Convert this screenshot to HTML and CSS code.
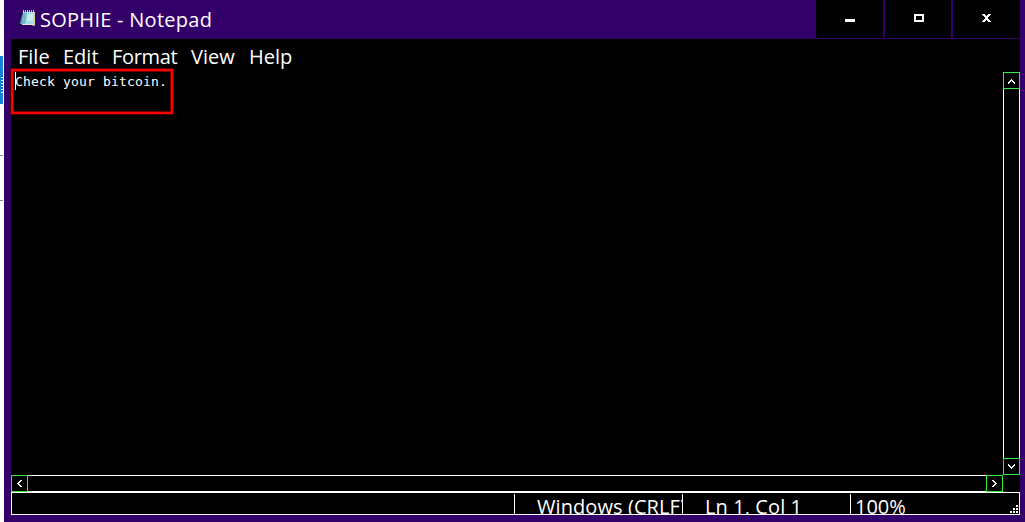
FILE: index.html
```html
<!DOCTYPE html>
<html lang="en">
<head>
<meta charset="utf-8">
<title>SOPHIE - Notepad</title>
<link rel="stylesheet" href="styles.css">
</head>
<body>
<div class="desktop">
  <div class="behind"><div class="behind-blue"></div><div class="behind-tick tick-a"></div><div class="behind-tick tick-b"></div></div>
  <div class="window">
    <header class="titlebar">
      <svg class="app-icon" width="17" height="18" viewBox="0 0 17 18">
        <path d="M4 2.5L0.5 15H12L15 16.5H16V3Z" fill="#477d9b"/>
        <path d="M14 3H16V16.5H13Z" fill="#d9cfa4"/>
        <path d="M4.5 3H14.5V15H2.5Z" fill="#a7dbe4"/>
        <path d="M4.5 3H8L6 15H2.5Z" fill="#72b6c9"/>
        <path d="M9 5H14V12H8Z" fill="#c6edf0"/>
        <path d="M3 15.5H15" stroke="#e4e4d8"/>
        <path d="M4.5 1V4M6.5 1V4M8.5 1V4M10.5 1V4M12.5 1V4M14.5 1V4" stroke="#d8eef0" stroke-width=".8"/>
      </svg>
      <span class="title">SOPHIE - Notepad</span>
      <div class="controls">
        <div class="control"><svg width="67" height="38" shape-rendering="crispEdges"><path d="M29 19h10v3H29z" fill="#fff"/></svg></div>
        <div class="control"><svg width="66" height="38" shape-rendering="crispEdges"><path d="M29 14h10v8H29zM31 16v4h6v-4z" fill="#fff" fill-rule="evenodd"/></svg></div>
        <div class="control"><svg width="67" height="38" shape-rendering="crispEdges"><path d="M29 14h3v1h1v1h1v-1h1v-1h3v1h-1v1h-1v1h-1v2h1v1h1v1h1v1h-3v-1h-1v-1h-1v1h-1v1h-3v-1h1v-1h1v-1h1v-2h-1v-1h-1v-1h-1z" fill="#fff"/></svg></div>
      </div>
    </header>
    <main class="client">
      <nav class="menu"><span class="file">File</span><span class="edit">Edit</span><span class="format">Format</span><span class="view">View</span><span class="help">Help</span></nav>
      <div class="editor">
        <div class="page"><div class="highlight"><span class="caret"></span><span class="note">Check your bitcoin.</span></div></div>
        <div class="vscroll">
          <div class="arrow"><svg width="15" height="15" shape-rendering="crispEdges"><path d="M7 6h1v1h1v1h1v1h1v2h-1v-1h-1v-1h-1v-1h-1v1h-1v1h-1v1h-1v-2h1v-1h1v-1h1z" fill="#fff"/></svg></div>
          <div class="vtrack"></div>
          <div class="arrow"><svg width="15" height="15" shape-rendering="crispEdges"><path d="M4 5h1v1h1v1h1v1h1v-1h1v-1h1v-1h1v2h-1v1h-1v1h-1v1h-1v-1h-1v-1h-1v-1h-1z" fill="#fff"/></svg></div>
        </div>
      </div>
      <div class="hscroll">
        <div class="arrow"><svg width="15" height="15" shape-rendering="crispEdges"><path d="M8 4h2v1h-1v1h-1v1h-1v1h1v1h1v1h1v1h-2v-1h-1v-1h-1v-1h-1v-1h1v-1h1v-1h1z" fill="#fff"/></svg></div>
        <div class="htrack"></div>
        <div class="arrow"><svg width="15" height="15" shape-rendering="crispEdges"><path d="M5 4h2v1h1v1h1v1h1v1h-1v1h-1v1h-1v1h-2v-1h1v-1h1v-1h1v-1h-1v-1h-1v-1h-1z" fill="#fff"/></svg></div>
      </div>
      <footer class="status">
        <div class="cell blank"></div>
        <div class="cell wide encoding"><span>Windows (CRLF)</span></div>
        <div class="cell wide position"><span>Ln 1, Col 1</span></div>
        <div class="cell zoom"><span>100%</span></div>
        <svg class="grip" width="8" height="8" shape-rendering="crispEdges"><path d="M6 0h2v2H6zM3 3h2v2H3zM6 3h2v2H6zM0 6h2v2H0zM3 6h2v2H3zM6 6h2v2H6z" fill="#fff"/></svg>
      </footer>
    </main>
  </div>
</div>
</body>
</html>
```
FILE: styles.css
```css
* { box-sizing: border-box; }
body { margin: 0; overflow: hidden; background: #fff; color: #fff; font-family: "Open Sans", "Noto Sans", sans-serif; font-size: 20px; }
svg { display: block; }
.desktop { display: flex; width: 1025px; height: 522px; }
.behind { width: 4px; padding-top: 56px; }
.behind-blue { width: 3px; height: 48px; background: repeating-linear-gradient(#0078d7 0 2px, #fff 2px 3px) 1px 19px / 2px 19px no-repeat, #1683d8; }
.behind-tick { width: 3px; height: 1px; background: #888; }
.tick-a { margin-top: 51px; }
.tick-b { margin-top: 44px; }
.window { width: 1021px; height: 522px; padding: 0 5px 7px 7px; background: #330069; }
.titlebar { display: flex; height: 39px; }
.app-icon { margin: 9px 0 0 8px; }
.title { margin-left: 4px; line-height: 39px; letter-spacing: .27px; white-space: nowrap; }
.controls { display: flex; gap: 2px; height: 38px; margin-left: auto; }
.control { background: #000; }
.client { display: flex; flex-direction: column; height: 476px; background: #000; }
.menu { display: flex; height: 33px; padding-left: 7px; line-height: 35px; white-space: nowrap; }
.file { width: 45px; }
.edit { width: 49px; }
.format { width: 79px; letter-spacing: -.35px; }
.view { width: 58px; }
.editor { display: flex; height: 403px; }
.page { flex: 1; }
.highlight { display: flex; width: 162px; height: 45px; margin-top: -3px; padding: 1px; border: 2px solid #f00; box-shadow: inset 0 0 0 1px #780000, 0 0 0 1px #500000; }
.caret { width: 1px; height: 18px; margin: 0 0 0 1px; background: #fff; }
.note { margin-left: -1px; font: 13px/19px "DejaVu Sans Mono", monospace; letter-spacing: .17px; white-space: nowrap; }
.vscroll { display: flex; flex-direction: column; width: 17px; }
.arrow { width: 17px; height: 17px; border: 1px solid #32f032; flex: none; }
.vtrack { flex: 1; border: solid #fff; border-width: 0 1px; }
.hscroll { display: flex; width: 992px; height: 17px; }
.htrack { flex: 1; border: solid #fff; border-width: 1px 0; }
.status { display: flex; height: 23px; padding-top: 1px; border: 1px solid #fff; }
.cell { height: 20px; overflow: hidden; line-height: 26px; white-space: nowrap; }
.blank { width: 502px; }
.wide { width: 168px; border-left: 1px solid #fff; }
.encoding { padding-left: 22px; letter-spacing: .08px; }
.position { padding-left: 22px; letter-spacing: .1px; }
.zoom { width: 160px; border-left: 1px solid #fff; padding-left: 4px; }
.grip { margin: 11px 0 0 0; }
```
